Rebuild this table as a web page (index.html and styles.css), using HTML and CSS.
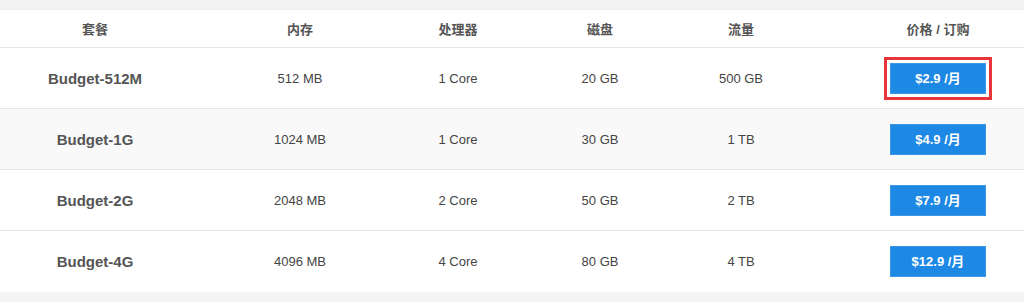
FILE: index.html
```
<!DOCTYPE html>
<html lang="zh">
<head>
<meta charset="utf-8">
<title>Pricing</title>
<link rel="stylesheet" href="styles.css">
</head>
<body>
<div class="wrap">
<table class="plans">
<colgroup>
<col class="c1"><col class="c2"><col class="c3"><col class="c4"><col class="c5"><col class="c6">
</colgroup>
<thead>
<tr><th>套餐</th><th>内存</th><th>处理器</th><th>磁盘</th><th>流量</th><th class="price">价格 / 订购</th></tr>
</thead>
<tbody>
<tr><td class="name">Budget-512M</td><td>512 MB</td><td>1 Core</td><td>20 GB</td><td>500 GB</td><td class="price"><a class="btn btn-focus">$2.9 /月</a></td></tr>
<tr class="alt"><td class="name">Budget-1G</td><td>1024 MB</td><td>1 Core</td><td>30 GB</td><td>1 TB</td><td class="price"><a class="btn">$4.9 /月</a></td></tr>
<tr><td class="name">Budget-2G</td><td>2048 MB</td><td>2 Core</td><td>50 GB</td><td>2 TB</td><td class="price"><a class="btn">$7.9 /月</a></td></tr>
<tr><td class="name">Budget-4G</td><td>4096 MB</td><td>4 Core</td><td>80 GB</td><td>4 TB</td><td class="price"><a class="btn">$12.9 /月</a></td></tr>
</tbody>
</table>
</div>
</body>
</html>
```
FILE: styles.css
```
html, body { margin: 0; padding: 0; }
body {
  background: #f4f4f4;
  font-family: "Liberation Sans", Arial, "Noto Sans CJK SC", sans-serif;
  color: #4a4a4a;
}
.wrap { padding-top: 10px; }
.plans {
  width: 1024px;
  table-layout: fixed;
  border-collapse: collapse;
  background: #fff;
  box-shadow: 0 1px 3px rgba(0,0,0,0.14);
}
.c1 { width: 190px; }
.c2 { width: 220px; }
.c3 { width: 96px; }
.c4 { width: 188px; }
.c5 { width: 94px; }
.c6 { width: 236px; }
.plans th {
  height: 37px;
  padding: 0;
  font-size: 13px;
  font-weight: bold;
  color: #555;
  text-align: center;
  border-bottom: 1px solid #e6e6e6;
}
.plans td {
  height: 60px;
  padding: 0;
  font-size: 13px;
  color: #444;
  text-align: center;
  border-bottom: 1px solid #e6e6e6;
}
.plans th.price, .plans td.price { padding-left: 64px; }
.plans tbody tr:last-child td { border-bottom: none; height: 61px; }
.plans tr.alt td { background: #f9f9f9; }
.plans td.name {
  font-size: 15px;
  font-weight: bold;
  color: #555;
}
.btn {
  display: inline-block;
  box-sizing: border-box;
  width: 96px;
  height: 31px;
  line-height: 29px;
  background: #1e88e5;
  border: 1px solid #3b97e8;
  color: #fff;
  font-size: 13px;
  font-weight: bold;
  vertical-align: middle;
}
.btn-focus {
  outline: 3px solid #e8353a;
  outline-offset: 3px;
}
```
